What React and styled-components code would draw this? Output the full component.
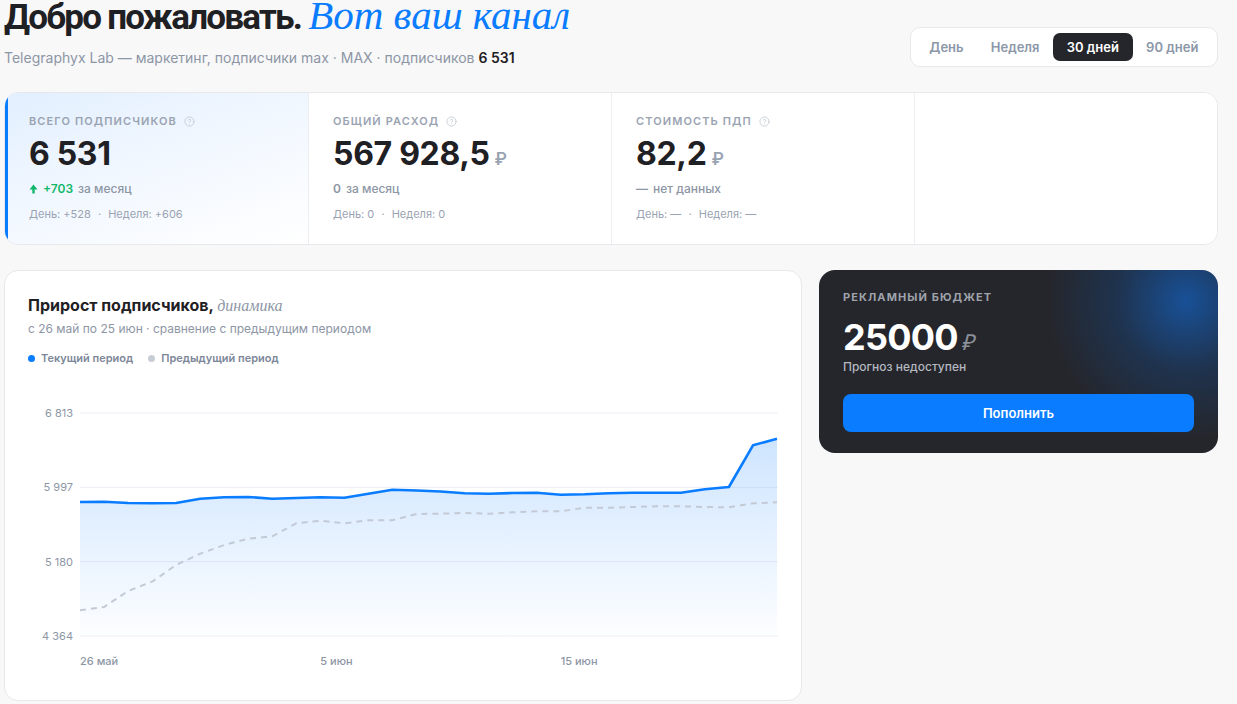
import React from "react";
import styled, { createGlobalStyle } from "styled-components";
import { CircleHelp } from "lucide-react";

const GlobalStyle = createGlobalStyle`
  body {
    margin: 0;
    background: #f8f8f9;
    font-family: Inter, "Noto Sans", sans-serif;
    color: #1f2024;
  }
`;

const current = [
  5836, 5839, 5825, 5821, 5825, 5872, 5887, 5891, 5872, 5880,
  5887, 5883, 5927, 5971, 5962, 5951, 5931, 5927, 5934, 5938,
  5916, 5920, 5931, 5938, 5938, 5938, 5975, 6000, 6458, 6531,
];

const previous = [
  4646, 4683, 4858, 4960, 5144, 5268, 5363, 5433, 5459, 5602,
  5630, 5602, 5635, 5635, 5704, 5707, 5715, 5707, 5722, 5733,
  5733, 5773, 5773, 5781, 5788, 5788, 5781, 5777, 5821, 5832,
];

const ticks = [6813, 5997, 5180, 4364];
const dates = [
  { i: 0, label: "26 май" },
  { i: 10, label: "5 июн" },
  { i: 20, label: "15 июн" },
];

const periods = ["День", "Неделя", "30 дней", "90 дней"];

const stats = [
  {
    label: "Всего подписчиков",
    value: "6 531",
    delta: "+703",
    up: true,
    note: "за месяц",
    day: "+528",
    week: "+606",
    accent: true,
  },
  {
    label: "Общий расход",
    value: "567 928,5",
    rub: true,
    delta: "0",
    note: "за месяц",
    day: "0",
    week: "0",
  },
  {
    label: "Стоимость ПДП",
    value: "82,2",
    rub: true,
    delta: "—",
    note: "нет данных",
    day: "—",
    week: "—",
  },
];

const fmt = (n) => n.toLocaleString("ru-RU").replace(/\s/g, " ");

const Chart = () => {
  const W = 750;
  const H = 290;
  const left = 52;
  const right = 749;
  const top = 27;
  const bottom = 250;
  const max = 6813;
  const min = 4364;
  const x = (i) => left + (i * (right - left)) / (current.length - 1);
  const y = (v) => top + ((max - v) * (bottom - top)) / (max - min);
  const line = (arr) =>
    arr.map((v, i) => `${i ? "L" : "M"}${x(i).toFixed(1)},${y(v).toFixed(1)}`).join(" ");
  const area = `${line(current)} L${x(current.length - 1)},${bottom} L${left},${bottom} Z`;

  return (
    <svg width={W} height={H} viewBox={`0 0 ${W} ${H}`}>
      <defs>
        <linearGradient id="fill" x1="0" y1="0" x2="0" y2="1">
          <stop offset="0%" stopColor="#0a7cff" stopOpacity="0.2" />
          <stop offset="100%" stopColor="#0a7cff" stopOpacity="0.01" />
        </linearGradient>
      </defs>
      {ticks.map((t) => (
        <g key={t}>
          <line x1={left} x2={right + 1} y1={y(t)} y2={y(t)} stroke="#eceef3" strokeWidth="1" />
          <text x={45} y={y(t) + 4} textAnchor="end" fontSize="11" fill="#8d96a5" fontFamily="Inter">
            {fmt(t)}
          </text>
        </g>
      ))}
      <path d={area} fill="url(#fill)" />
      <path d={line(previous)} fill="none" stroke="#c3cad5" strokeWidth="2" strokeDasharray="6 5" />
      <path d={line(current)} fill="none" stroke="#0a7cff" strokeWidth="2.6" strokeLinejoin="round" />
      {dates.map((d) => (
        <text key={d.label} x={x(d.i)} y={279} fontSize="11" fill="#8d96a5" fontFamily="Inter" fontWeight="500">
          {d.label}
        </text>
      ))}
    </svg>
  );
};

const UpArrow = () => (
  <svg width="9" height="10" viewBox="0 0 9 10">
    <path d="M4.5 0.5 L8.5 5.5 H5.7 V9.5 H3.3 V5.5 H0.5 Z" fill="#12b76a" />
  </svg>
);

export default function App() {
  return (
    <Page>
      <GlobalStyle />
      <Header>
        <div>
          <Title>
            Добро пожаловать. <Accent>Вот ваш канал</Accent>
          </Title>
          <Subtitle>
            Telegraphyx Lab — маркетинг, подписчики max · MAX · подписчиков <b>6 531</b>
          </Subtitle>
        </div>
        <Segmented>
          {periods.map((p) => (
            <Segment key={p} $active={p === "30 дней"}>
              {p}
            </Segment>
          ))}
        </Segmented>
      </Header>

      <StatsCard>
        {stats.map((s) => (
          <StatCell key={s.label} $accent={s.accent}>
            <StatLabel>
              {s.label}
              <CircleHelp size={11} color="#bcc3cd" strokeWidth={1.6} />
            </StatLabel>
            <StatValue>
              {s.value}
              {s.rub && <Rub>₽</Rub>}
            </StatValue>
            <Delta>
              {s.up && <UpArrow />}
              <DeltaNum $up={s.up}>{s.delta}</DeltaNum>
              <span>{s.note}</span>
            </Delta>
            <StatSub>
              День: {s.day} <Dot>·</Dot> Неделя: {s.week}
            </StatSub>
          </StatCell>
        ))}
        <StatCell />
      </StatsCard>

      <Row>
        <ChartCard>
          <ChartTitle>
            Прирост подписчиков, <em>динамика</em>
          </ChartTitle>
          <ChartSub>с 26 май по 25 июн · сравнение с предыдущим периодом</ChartSub>
          <Legend>
            <LegendItem $color="#0a7cff">Текущий период</LegendItem>
            <LegendItem $color="#c8cdd5">Предыдущий период</LegendItem>
          </Legend>
          <ChartWrap>
            <Chart />
          </ChartWrap>
        </ChartCard>

        <BudgetCard>
          <BudgetLabel>Рекламный бюджет</BudgetLabel>
          <BudgetValue>
            25000<BudgetRub>₽</BudgetRub>
          </BudgetValue>
          <BudgetNote>Прогноз недоступен</BudgetNote>
          <TopUp>Пополнить</TopUp>
        </BudgetCard>
      </Row>
    </Page>
  );
}

const Page = styled.div`
  padding: 0 19px 20px 4px;
`;

const Header = styled.header`
  display: flex;
  justify-content: space-between;
  align-items: flex-end;
  margin-bottom: 24px;
`;

const Title = styled.h1`
  margin: 0;
  height: 36px;
  font-family: Roboto, Inter, sans-serif;
  font-size: 35px;
  line-height: 36px;
  font-weight: 700;
  letter-spacing: -0.05em;
  color: #1f2024;
  white-space: nowrap;
`;

const Accent = styled.span`
  font-family: "Liberation Serif", serif;
  font-style: italic;
  font-weight: 400;
  font-size: 41px;
  line-height: 0;
  letter-spacing: 0;
  color: #0a7cff;
`;

const Subtitle = styled.div`
  margin-top: 12px;
  font-size: 14px;
  line-height: 20px;
  color: #8d96a5;

  b {
    font-weight: 600;
    color: #1f2024;
  }
`;

const Segmented = styled.div`
  display: flex;
  padding: 5px;
  background: #fff;
  border: 1px solid #e6e8ec;
  border-radius: 10px;
  margin-bottom: 1px;
`;

const Segment = styled.button`
  border: 0;
  height: 28px;
  padding: 0 13.6px;
  border-radius: 7px;
  font-family: Inter, sans-serif;
  font-size: 13px;
  font-weight: 600;
  background: ${(p) => (p.$active ? "#25262b" : "transparent")};
  color: ${(p) => (p.$active ? "#fff" : "#8c97a8")};
`;

const StatsCard = styled.section`
  display: grid;
  grid-template-columns: repeat(4, 1fr);
  background: #fff;
  border: 1px solid #e6e8ec;
  border-radius: 14px;
  overflow: hidden;
  margin-bottom: 25px;
`;

const StatCell = styled.div`
  padding: 21px 24px 23px;
  border-left: ${(p) => (p.$accent ? "3px solid #0a7cff" : "1px solid #eceef2")};
  padding-left: ${(p) => (p.$accent ? "21px" : "24px")};
  background: ${(p) =>
    p.$accent ? "linear-gradient(160deg, #e2efff 0%, #f1f7ff 45%, #ffffff 100%)" : "#fff"};
`;

const StatLabel = styled.div`
  display: flex;
  align-items: center;
  gap: 7px;
  font-size: 11px;
  line-height: 14px;
  font-weight: 600;
  letter-spacing: 0.1em;
  text-transform: uppercase;
  color: #9aa3b2;
`;

const StatValue = styled.div`
  margin-top: 8px;
  font-size: 32px;
  line-height: 36px;
  font-weight: 700;
  letter-spacing: -0.01em;
  color: #1f2024;
`;

const Rub = styled.span`
  margin-left: 5px;
  font-size: 17px;
  line-height: 1;
  font-weight: 600;
  color: #9aa3b2;
`;

const Delta = styled.div`
  margin-top: 9px;
  display: flex;
  align-items: center;
  gap: 5px;
  font-size: 12px;
  line-height: 16px;
  font-weight: 500;
  color: #8d96a5;
`;

const DeltaNum = styled.span`
  font-weight: 600;
  color: ${(p) => (p.$up ? "#12b76a" : "#8d96a5")};
`;

const StatSub = styled.div`
  margin-top: 10px;
  font-size: 11px;
  line-height: 14px;
  color: #9aa3b2;
`;

const Dot = styled.span`
  margin: 0 4px;
`;

const Row = styled.div`
  display: grid;
  grid-template-columns: 2fr 1fr;
  gap: 17px;
  align-items: start;
`;

const ChartCard = styled.section`
  background: #fff;
  border: 1px solid #e6e8ec;
  border-radius: 14px;
  padding: 23px 23px 24px;
`;

const ChartTitle = styled.h2`
  margin: 0;
  font-size: 16px;
  line-height: 22px;
  font-weight: 700;
  color: #1f2024;

  em {
    font-family: "Liberation Serif", serif;
    font-weight: 400;
    font-size: 16px;
    color: #8d96a5;
  }
`;

const ChartSub = styled.div`
  margin-top: 4px;
  font-size: 12px;
  line-height: 16px;
  color: #8d96a5;
`;

const Legend = styled.div`
  margin-top: 14px;
  display: flex;
  gap: 15px;
`;

const LegendItem = styled.span`
  display: flex;
  align-items: center;
  gap: 6px;
  font-size: 11px;
  line-height: 14px;
  font-weight: 600;
  color: #7d8799;

  &::before {
    content: "";
    width: 7px;
    height: 7px;
    border-radius: 50%;
    background: ${(p) => p.$color};
  }
`;

const ChartWrap = styled.div`
  margin-top: 21px;
  display: flex;
`;

const BudgetCard = styled.section`
  border-radius: 16px;
  padding: 20px 24px 21px;
  background: radial-gradient(circle at 92% 17%, rgba(22, 88, 170, 0.85) 0px, rgba(22, 70, 130, 0.4) 70px, rgba(37, 38, 43, 0) 140px),
    #25262b;
  color: #fff;
`;

const BudgetLabel = styled.div`
  font-size: 11px;
  line-height: 14px;
  font-weight: 700;
  letter-spacing: 0.1em;
  text-transform: uppercase;
  color: #9fa3ab;
`;

const BudgetValue = styled.div`
  margin-top: 13px;
  font-size: 36px;
  line-height: 40px;
  font-weight: 700;
  letter-spacing: -0.02em;
  color: #fff;
`;

const BudgetRub = styled.span`
  margin-left: 3px;
  font-family: "Liberation Serif", serif;
  font-style: italic;
  font-weight: 400;
  font-size: 22px;
  line-height: 1;
  color: #8a8f99;
`;

const BudgetNote = styled.div`
  margin-top: 2px;
  font-size: 12px;
  line-height: 16px;
  font-weight: 500;
  color: #b4b8c0;
`;

const TopUp = styled.button`
  margin-top: 19px;
  width: 100%;
  height: 38px;
  border: 0;
  border-radius: 8px;
  background: #0a7cff;
  color: #fff;
  font-family: Inter, sans-serif;
  font-size: 13px;
  font-weight: 600;
`;
